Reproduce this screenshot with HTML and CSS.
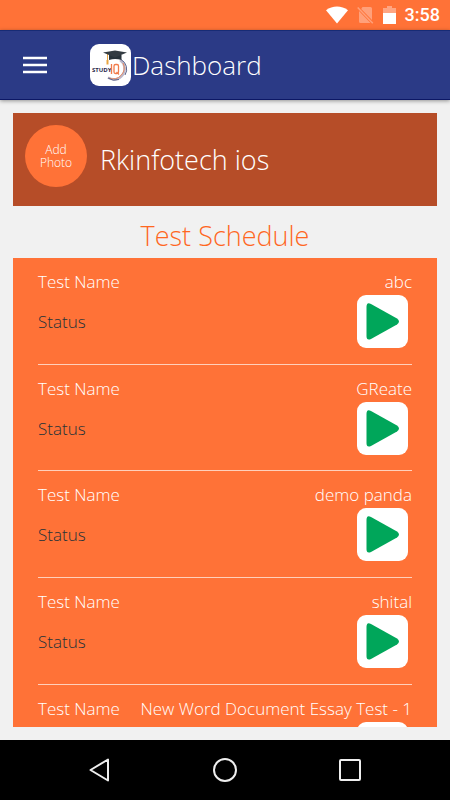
FILE: index.html
```html
<!DOCTYPE html>
<html lang="en">
<head>
<meta charset="utf-8">
<meta name="viewport" content="width=device-width, initial-scale=1">
<title>Dashboard</title>
<link rel="stylesheet" href="styles.css">
</head>
<body>
<svg class="defs" aria-hidden="true">
  <symbol id="play" viewBox="0 0 51 53">
    <path d="M14 9 Q9.500 6.500 9.500 12 V41 Q9.500 46 14 44 L40 29.500 Q44 26.500 40 23.500 Z" fill="#00a65a"/>
  </symbol>
</svg>
<div class="status-bar">
  <svg width="22" height="18" viewBox="0 0 22 18" aria-hidden="true"><path d="M0 4.200C6.500-.8 15.500-.8 22 4.200L11 17.500Z" fill="#fff"/></svg>
  <svg width="17" height="18" viewBox="0 0 17 18" aria-hidden="true"><path d="M5.500 1H13.500Q15 1 15 2.500V14L4.200 3ZM2 5L13.500 17H3.500Q2 17 2 15.500Z" fill="#ffa07a"/><path d="M.7 1.500L15.800 17.200" stroke="#ffa07a" stroke-width="1.500"/></svg>
  <svg width="13" height="18" viewBox="0 0 13 18" aria-hidden="true"><path d="M4 0H9V2H13V8H0V2H4Z" fill="#ffa582"/><path d="M0 7H13V18H0Z" fill="#fff"/></svg>
  <time class="clock">3:58</time>
</div>
<header class="app-bar">
  <button class="menu" type="button" aria-label="Menu"><svg width="24" height="18" viewBox="0 0 24 18"><path d="M0 2H24M0 9H24M0 16H24" stroke="#fff" stroke-width="2.500"/></svg></button>
  <svg class="logo" width="41" height="42" viewBox="0 0 41 42" role="img" aria-label="Study IQ">
    <rect width="41" height="42" rx="9" fill="#fff"/>
    <path d="M30 16A10.500 10.500 0 0 1 18 33.500" fill="none" stroke="#bcb8c9" stroke-width="2.500"/>
    <path d="M31 15.500A11 11 0 0 1 35 31" fill="none" stroke="#5b648c" stroke-width="1"/>
    <path d="M33 19A11 11 0 0 1 19 34" fill="none" stroke="#e78b65" stroke-width="1"/>
    <path d="M29 35.500A12 12 0 0 1 18 34" fill="none" stroke="#5b648c" stroke-width="1"/>
    <path d="M17.500 10V20" stroke="#e8a540" stroke-width="1"/>
    <path d="M16.500 16H18.500V20.500H16.500Z" fill="#e8a540"/>
    <path d="M19 11V16Q25 14 31.500 16V11Z" fill="#29333a"/>
    <path d="M13 8.500L25 6.500L37 8.500L25 13.500Z" fill="#343c42"/>
    <text class="logo-study" x="2" y="28">STUDY</text>
    <g fill="none" stroke="#f17b4a" stroke-width="1.300"><path d="M21.500 20V30"/><rect x="24" y="20.500" width="4.500" height="9" rx="1.500"/><path d="M26.500 28L29 30.500"/></g>
  </svg>
  <h1>Dashboard</h1>
</header>
<main>
  <section class="profile">
    <button class="avatar" type="button">Add<br>Photo</button>
    <p class="user">Rkinfotech ios</p>
  </section>
  <h2>Test Schedule</h2>
  <ul class="tests">
    <li><div class="labels"><span>Test Name</span><span class="status">Status</span></div><div class="details"><span>abc</span><button class="play" type="button" aria-label="Start abc"><svg><use href="#play"/></svg></button></div></li>
    <li><div class="labels"><span>Test Name</span><span class="status">Status</span></div><div class="details"><span>GReate</span><button class="play" type="button" aria-label="Start GReate"><svg><use href="#play"/></svg></button></div></li>
    <li><div class="labels"><span>Test Name</span><span class="status">Status</span></div><div class="details"><span>demo panda</span><button class="play" type="button" aria-label="Start demo panda"><svg><use href="#play"/></svg></button></div></li>
    <li><div class="labels"><span>Test Name</span><span class="status">Status</span></div><div class="details"><span>shital</span><button class="play" type="button" aria-label="Start shital"><svg><use href="#play"/></svg></button></div></li>
    <li><div class="labels"><span>Test Name</span></div><div class="details"><span>New Word Document Essay Test - 1</span><button class="play" type="button" aria-label="Start New Word Document Essay Test - 1"><svg><use href="#play"/></svg></button></div></li>
  </ul>
</main>
<nav class="system-nav" aria-label="System">
  <button type="button" aria-label="Back"><svg width="26" height="26" viewBox="0 0 26 26"><path d="M3.500 13L21 2.500V23.500Z"/></svg></button>
  <button type="button" aria-label="Home"><svg width="26" height="26" viewBox="0 0 26 26"><circle cx="13" cy="13" r="11"/></svg></button>
  <button type="button" aria-label="Recent apps"><svg width="26" height="26" viewBox="0 0 26 26"><rect x="3" y="3" width="20" height="20" rx="1"/></svg></button>
</nav>
</body>
</html>
```
FILE: styles.css
```css
* { box-sizing: border-box; }
body {
  margin: 0;
  height: 100vh;
  display: flex;
  flex-direction: column;
  overflow: hidden;
  background: #f1f1f1;
  color: #fff;
  font-family: "Open Sans", sans-serif;
  font-weight: 300;
}
button {
  padding: 0;
  border: 0;
  background: none;
  color: inherit;
  font: inherit;
}
svg { display: block; }
h1, h2, p, ul { margin: 0; padding: 0; font-weight: 300; }
.defs { position: absolute; width: 0; height: 0; }
.status-bar {
  flex: none;
  height: 30px;
  padding: 0 10px;
  display: flex;
  justify-content: flex-end;
  align-items: center;
  gap: 9px;
  background: #ff7237;
}
.clock {
  font: 500 18px/30px Roboto, sans-serif;
}
.app-bar {
  flex: none;
  height: 70px;
  padding-left: 23px;
  display: flex;
  align-items: center;
  background: #2b3a86;
  border-top: 1px solid #172b75;
  border-bottom: 1px solid #0c1765;
  box-shadow: 0 1px 4px #0006;
}
.logo { margin: 0 1px 0 43px; }
.logo-study {
  font: 700 6px "Open Sans", sans-serif;
  fill: #29294d;
}
h1 { font-size: 26px; line-height: 36px; }
main {
  flex: 1;
  min-height: 0;
  padding: 13px;
  display: flex;
  flex-direction: column;
}
.profile {
  flex: none;
  height: 93px;
  padding: 12px;
  display: flex;
  align-items: flex-start;
  gap: 13px;
  background: #b64d28;
}
.avatar {
  width: 62px;
  height: 62px;
  border-radius: 50%;
  background: #ff7237;
  font-size: 12px;
  line-height: 13px;
}
.user { font-size: 27px; line-height: 69px; }
h2 {
  flex: none;
  padding-top: 8px;
  color: #ff671f;
  font-size: 27px;
  line-height: 44px;
  text-align: center;
}
.tests {
  flex: 1;
  min-height: 0;
  overflow: hidden;
  padding: 0 25px;
  background: #ff7237;
  list-style: none;
  font-size: 17px;
  font-weight: 350;
  line-height: 24px;
}
.tests li {
  padding: 12px 0 16px;
  display: flex;
  justify-content: space-between;
  border-bottom: 1px solid #ffd0bb;
}
.tests li:nth-child(3n + 2) { padding-bottom: 15px; }
.labels, .details {
  display: flex;
  flex-direction: column;
}
.labels { gap: 16px; }
.details { align-items: flex-end; gap: 1px; }
.status { color: #263238; }
.play {
  margin-right: 4px;
  border-radius: 9px;
  background: #fff;
}
.play svg { width: 51px; height: 53px; }
.system-nav {
  flex: none;
  height: 60px;
  display: flex;
  justify-content: center;
  align-items: center;
  gap: 99px;
  background: #000;
}
.system-nav svg {
  fill: none;
  stroke: #eee;
  stroke-width: 2;
  stroke-linejoin: round;
}
```
